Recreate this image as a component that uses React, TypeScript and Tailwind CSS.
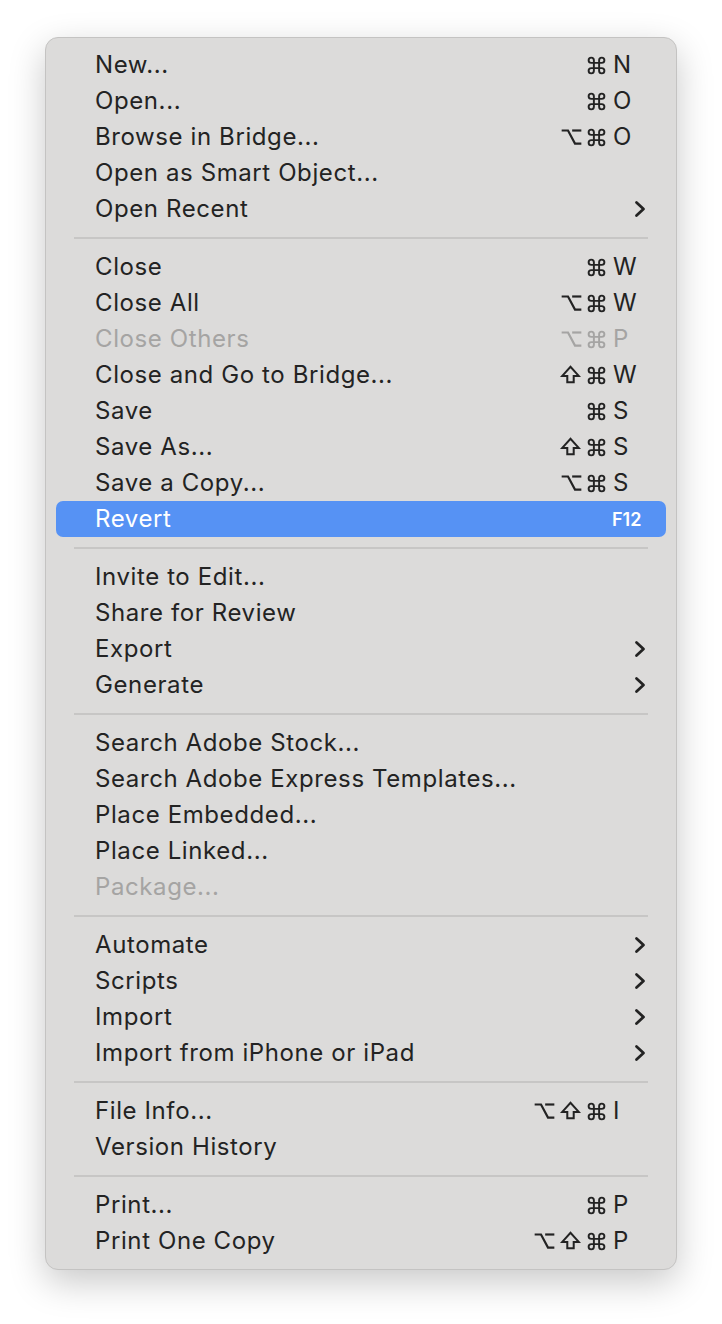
import type { ReactNode } from 'react';

type Mod = 'cmd' | 'opt' | 'shift';

interface Item {
  label: string;
  mods?: Mod[];
  keyName?: string;
  submenu?: boolean;
  disabled?: boolean;
  active?: boolean;
  fkey?: string;
}

const groups: Item[][] = [
  [
    { label: 'New...', mods: ['cmd'], keyName: 'N' },
    { label: 'Open...', mods: ['cmd'], keyName: 'O' },
    { label: 'Browse in Bridge...', mods: ['opt', 'cmd'], keyName: 'O' },
    { label: 'Open as Smart Object...' },
    { label: 'Open Recent', submenu: true },
  ],
  [
    { label: 'Close', mods: ['cmd'], keyName: 'W' },
    { label: 'Close All', mods: ['opt', 'cmd'], keyName: 'W' },
    { label: 'Close Others', mods: ['opt', 'cmd'], keyName: 'P', disabled: true },
    { label: 'Close and Go to Bridge...', mods: ['shift', 'cmd'], keyName: 'W' },
    { label: 'Save', mods: ['cmd'], keyName: 'S' },
    { label: 'Save As...', mods: ['shift', 'cmd'], keyName: 'S' },
    { label: 'Save a Copy...', mods: ['opt', 'cmd'], keyName: 'S' },
    { label: 'Revert', fkey: 'F12', active: true },
  ],
  [
    { label: 'Invite to Edit...' },
    { label: 'Share for Review' },
    { label: 'Export', submenu: true },
    { label: 'Generate', submenu: true },
  ],
  [
    { label: 'Search Adobe Stock...' },
    { label: 'Search Adobe Express Templates...' },
    { label: 'Place Embedded...' },
    { label: 'Place Linked...' },
    { label: 'Package...', disabled: true },
  ],
  [
    { label: 'Automate', submenu: true },
    { label: 'Scripts', submenu: true },
    { label: 'Import', submenu: true },
    { label: 'Import from iPhone or iPad', submenu: true },
  ],
  [
    { label: 'File Info...', mods: ['opt', 'shift', 'cmd'], keyName: 'I' },
    { label: 'Version History' },
  ],
  [
    { label: 'Print...', mods: ['cmd'], keyName: 'P' },
    { label: 'Print One Copy', mods: ['opt', 'shift', 'cmd'], keyName: 'P' },
  ],
];

function ModIcon({ mod }: { mod: Mod }) {
  if (mod === 'cmd') {
    return (
      <svg viewBox="0 0 24 24" className="h-[21px] w-[21px]" fill="none" stroke="currentColor" strokeWidth="2.2" strokeLinecap="round" strokeLinejoin="round">
        <path d="M15 6v12a3 3 0 1 0 3-3H6a3 3 0 1 0 3 3V6a3 3 0 1 0-3 3h12a3 3 0 1 0-3-3" />
      </svg>
    );
  }
  if (mod === 'opt') {
    return (
      <svg viewBox="0 0 24 24" className="h-[21px] w-[21px]" fill="none" stroke="currentColor" strokeWidth="2.5" strokeLinecap="square">
        <path d="M2 4h6l8 15h6" />
        <path d="M14 4h8" />
      </svg>
    );
  }
  return (
    <svg viewBox="0 0 24 24" className="h-[22px] w-[23px]" fill="none" stroke="currentColor" strokeWidth="2.2" strokeLinejoin="miter">
      <path d="M8.5 20v-7H3l9-10 9 10h-5.5v7z" />
    </svg>
  );
}

function Chevron() {
  return (
    <svg viewBox="0 0 12 18" className="h-[18px] w-[12px]" fill="none" stroke="currentColor" strokeWidth="2.8" strokeLinecap="round" strokeLinejoin="round">
      <path d="M2.5 2.5l7 6.5-7 6.5" />
    </svg>
  );
}

function Row({ item }: { item: Item }) {
  const color = item.active
    ? 'text-white bg-[#5692f4] rounded-[7px]'
    : item.disabled
      ? 'text-[#a5a4a3]'
      : 'text-[#232323]';

  let right: ReactNode = null;
  if (item.mods && item.keyName) {
    right = (
      <div className="flex items-center">
        <div className="flex items-center justify-end gap-[4px]">
          {item.mods.map((m, i) => (
            <ModIcon key={i} mod={m} />
          ))}
        </div>
        <div className="ml-[6px] w-[53px] text-left tracking-normal">{item.keyName}</div>
      </div>
    );
  } else if (item.fkey) {
    right = <div className="w-[54px] text-[18px] font-semibold tracking-normal">{item.fkey}</div>;
  } else if (item.submenu) {
    right = (
      <div className="mr-[20px] flex items-center">
        <Chevron />
      </div>
    );
  }

  return (
    <div className={`flex h-[36px] items-center pl-[39px] ${color}`}>
      <div className="flex-1 whitespace-nowrap">{item.label}</div>
      {right}
    </div>
  );
}

export default function App() {
  return (
    <div className="min-h-[1324px] bg-white pl-[45px] pt-[37px]" style={{ fontFamily: 'Inter, "Noto Sans", sans-serif' }}>
      <div className="flex w-[632px] flex-col rounded-[13px] border border-[#c4c3c2] bg-[#dcdbda] px-[10px] pb-[10px] pt-[9px] text-[24px] tracking-[0.025em] shadow-[0_12px_36px_rgba(0,0,0,0.22)]">
        {groups.map((g, gi) => (
          <div key={gi} className="flex flex-col">
            {gi > 0 && (
              <div className="flex h-[22px] items-center px-[18px]">
                <div className="h-[2px] w-full bg-[#c7c6c5]" />
              </div>
            )}
            {g.map((item) => (
              <Row key={item.label} item={item} />
            ))}
          </div>
        ))}
      </div>
    </div>
  );
}
